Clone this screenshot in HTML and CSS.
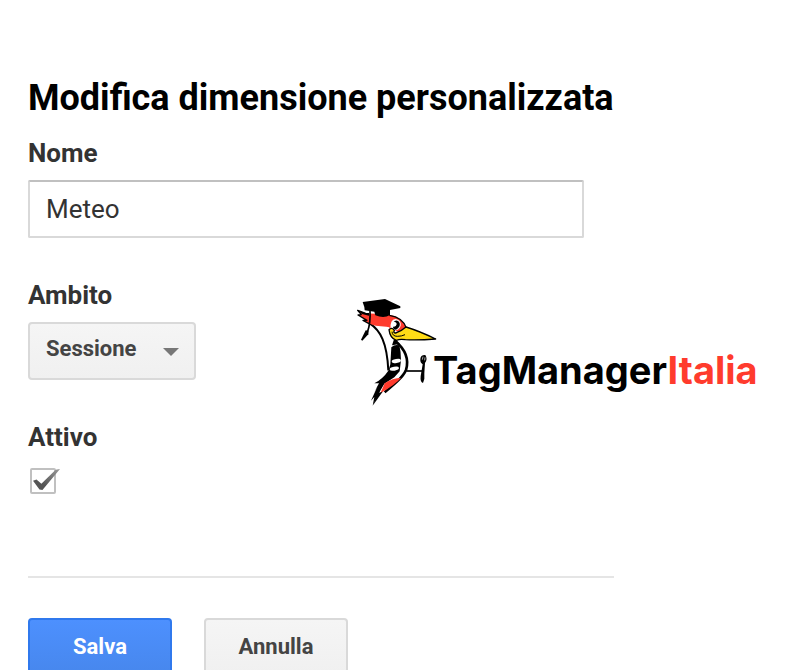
FILE: index.html
```html
<!DOCTYPE html>
<html lang="it">
<head>
<meta charset="utf-8">
<meta name="viewport" content="width=device-width, initial-scale=1">
<title>Modifica dimensione personalizzata</title>
<link rel="stylesheet" href="styles.css">
</head>
<body>
<main class="page">
  <h1 class="title">Modifica dimensione personalizzata</h1>
  <form class="form">
    <div class="field">
      <label class="label" for="nome">Nome</label>
      <input class="text-input" id="nome" type="text" value="Meteo">
    </div>
    <div class="middle">
      <div class="settings">
        <div class="field">
          <label class="label" for="ambito">Ambito</label>
          <div class="select-wrap">
            <select class="select" id="ambito">
              <option>Sessione</option>
            </select>
          </div>
        </div>
        <div class="field">
          <label class="label" for="attivo">Attivo</label>
          <input class="checkbox" id="attivo" type="checkbox" checked>
        </div>
      </div>
      <div class="brand">
        <svg class="bird" viewBox="33 24 246 327" aria-hidden="true">
          <!-- neck and body -->
          <path d="M75 101C106 121 126 158 130 241" fill="none" stroke="#000" stroke-width="6"/>
          <path d="M150 152C180 177 193 207 183 240C175 260 150 281 119 307" fill="none" stroke="#000" stroke-width="8"/>
          <path d="M147 148L141 166L164 162L153 150Z" fill="#000"/>
          <!-- wing -->
          <path d="M139 172Q149 162 163 166Q168 185 168 211L164 244L148 262L118 281L107 300L83 347L88 321L78 332L97 290L86 309L102 280L88 280Q114 266 130 242L136 223Z" fill="#000"/>
          <ellipse cx="154" cy="213" rx="14" ry="6" transform="rotate(-10 154 213)" fill="#fff"/>
          <ellipse cx="148" cy="236" rx="14" ry="6" transform="rotate(-10 148 236)" fill="#fff"/>
          <path d="M119 280Q143 264 168 264Q153 282 106 310Z" fill="#ff3b2d"/>
          <path d="M113 305L84 346L99 309Z" fill="#000"/>
          <!-- head -->
          <path d="M38 61L62 70L91 71L136 75C160 80 177 93 183 113L162 125L134 118L133 112C110 108 88 110 72 100L54 91L66 91L39 75L49 74Z" fill="#ff3b2d"/>
          <path d="M133 76C160 80 177 93 184 114M72 101L54 91L66 91L39 75L49 74L38 61L62 70" fill="none" stroke="#000" stroke-width="4" stroke-linejoin="round"/>
          <path d="M36 60L60 69L72 69L72 77L51 72Z" fill="#000"/>
          <path d="M137 116Q134 89 152 87Q169 90 167 107Q162 122 145 122Z" fill="#fff"/>
          <path d="M146 95Q159 86 164 99Q167 112 153 119Q144 118 144 110Q153 112 155 103Q155 95 146 95Z" fill="#000"/>
          <!-- beak -->
          <path d="M132 119Q141 110 148 121Q144 129 152 129Q167 125 183 111Q225 124 272 147Q219 151 181 149Q165 146 154 151Q135 145 132 119Z" fill="#ffdc16" stroke="#000" stroke-width="4" stroke-linejoin="round"/>
          <path d="M141 125Q142 139 157 139Q170 139 180 134" fill="none" stroke="#000" stroke-width="3"/>
          <!-- graduation cap -->
          <path d="M53 36L120 27L166 49L166 54L135 60L135 75Q117 87 91 76L88 65L59 61L58 51Z" fill="#000"/>
          <path d="M75 60Q77 98 68 124" fill="none" stroke="#000" stroke-width="5"/>
          <path d="M62 121L71 122L70 133L52 152L48 149Z" fill="#000"/>
          <!-- leg and foot -->
          <path d="M184 243H235" stroke="#000" stroke-width="5"/>
          <path d="M226 207Q227 194 241 195Q249 208 240 219L238 250Q240 267 234 279Q225 276 227 258L233 223Q225 218 226 207Z" fill="#000"/>
          <path d="M232 209L234 200M239 211L240 202" stroke="#fff" stroke-width="2"/>
        </svg>
        <span class="brand-name">TagManager<span class="brand-accent">Italia</span></span>
      </div>
    </div>
    <div class="actions">
      <button class="button button-primary" type="submit">Salva</button>
      <button class="button" type="button">Annulla</button>
    </div>
  </form>
</main>
</body>
</html>
```
FILE: styles.css
```css
* {
  box-sizing: border-box;
}

body {
  margin: 0;
  background: #fff;
  color: #333;
  font-family: Roboto, "Liberation Sans", sans-serif;
}

.page {
  padding: 76px 28px 0;
}

.title {
  margin: 0 0 12px;
  color: #000;
  font-size: 36px;
  font-weight: 700;
  line-height: 44px;
}

.form,
.settings {
  display: flex;
  flex-direction: column;
  gap: 36px;
}

.field {
  display: flex;
  flex-direction: column;
  align-items: flex-start;
  gap: 6px;
}

.label {
  font-size: 26px;
  font-weight: 700;
  line-height: 42px;
}

.text-input {
  width: 100%;
  max-width: 556px;
  height: 58px;
  padding: 0 16px;
  border: 2px solid #d9d9d9;
  border-top-color: #c0c0c0;
  border-radius: 2px;
  background: #fff;
  color: #333;
  font: 400 26px Roboto, "Liberation Sans", sans-serif;
}

.middle {
  display: flex;
  align-items: flex-start;
  gap: 160px;
}

.select-wrap {
  position: relative;
}

.select-wrap::after {
  content: "";
  position: absolute;
  top: 26px;
  right: 17px;
  border: 8px solid transparent;
  border-top-color: #777;
  border-bottom: 0;
  pointer-events: none;
}

.select,
.button {
  height: 58px;
  border: 2px solid #d9d9d9;
  border-radius: 4px;
  background: linear-gradient(#f5f5f5, #f0f0f0);
  color: #444;
  font: 700 22px Roboto, "Liberation Sans", sans-serif;
}

.select {
  appearance: none;
  width: 168px;
  padding: 0 40px 6px 16px;
}

.checkbox {
  appearance: none;
  position: relative;
  width: 26px;
  height: 26px;
  margin: 4px 2px 0;
  border: 2px solid #c0c0c0;
  border-radius: 2px;
  background: #fff;
}

.checkbox:checked::before {
  content: "";
  position: absolute;
  top: -1px;
  left: 1px;
  width: 27px;
  height: 21px;
  background: linear-gradient(25deg, #555 30%, #999);
  clip-path: polygon(0 56%, 13% 50%, 31% 70%, 84% 4%, 100% 0, 35% 100%, 24% 98%);
}

.brand {
  display: flex;
  align-items: flex-start;
  margin-top: 24px;
}

.bird {
  width: 82px;
  height: 109px;
}

.brand-name {
  margin: 48px 0 0 -5px;
  color: #000;
  font-family: Inter, "Liberation Sans", sans-serif;
  font-size: 38px;
  font-weight: 700;
  line-height: 48px;
}

.brand-accent {
  color: #ff3b2d;
}

.actions {
  display: flex;
  gap: 32px;
  width: 100%;
  max-width: 586px;
  margin-top: 46px;
  padding-top: 40px;
  border-top: 2px solid #e5e5e5;
}

.button {
  width: 144px;
  padding: 0 0 2px;
}

.button-primary {
  border-color: #3079ed;
  background: linear-gradient(#4d90fe, #4787ed);
  color: #fff;
}
```
